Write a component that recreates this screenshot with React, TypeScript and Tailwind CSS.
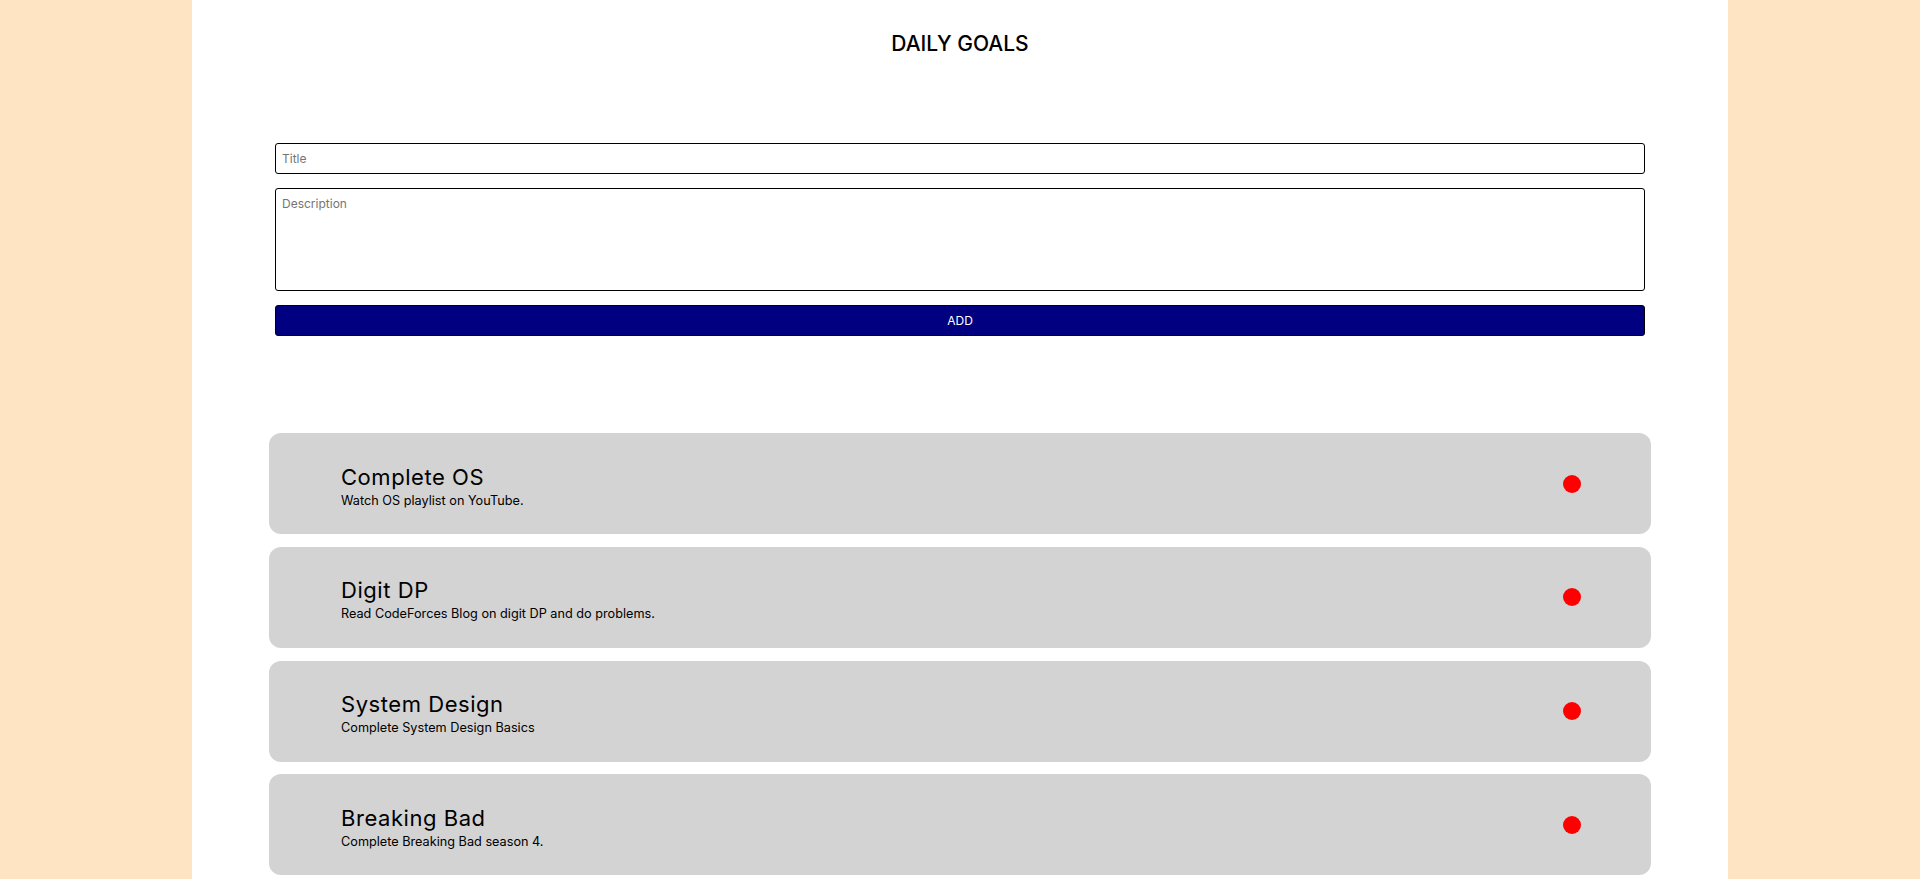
import React from "react";

const goals = [
  { title: "Complete OS", desc: "Watch OS playlist on YouTube." },
  { title: "Digit DP", desc: "Read CodeForces Blog on digit DP and do problems." },
  { title: "System Design", desc: "Complete System Design Basics" },
  { title: "Breaking Bad", desc: "Complete Breaking Bad season 4." },
];

export default function App() {
  return (
    <div className="min-h-screen bg-[#ffe4c4]" style={{ fontFamily: "Inter, 'Open Sans', sans-serif" }}>
      <div className="mx-auto w-[1536px] min-h-screen bg-white pt-[33px] pb-[20px]">
        <h1 className="text-center text-[21px] leading-[22px] font-medium text-black">DAILY GOALS</h1>
        <div className="mx-auto mt-[88px] flex w-[1370px] flex-col gap-[14px]">
          <input
            placeholder="Title"
            className="h-[31px] w-full rounded-[3px] border-[1.5px] border-black px-[6px] text-[12px] text-black placeholder:text-[#757575] outline-none"
          />
          <textarea
            placeholder="Description"
            className="h-[103px] w-full resize-none rounded-[3px] border-[1.5px] border-black px-[6px] pt-[6px] text-[12px] text-black placeholder:text-[#757575] outline-none"
          />
          <button className="h-[31px] w-full rounded-[3px] border-[1.5px] border-black bg-[#000080] text-[12px] text-white">
            ADD
          </button>
        </div>
        <div className="mx-auto mt-[97px] flex w-[1382px] flex-col gap-[12.8px]">
          {goals.map((g) => (
            <div key={g.title} className="flex h-[101px] items-center justify-between rounded-[12px] bg-[#d3d3d3] pl-[72px] pr-[70px]">
              <div className="flex flex-col pt-[3px]">
                <div className="text-[22px] leading-[30px] tracking-[0.55px] text-black">{g.title}</div>
                <div className="text-[12.7px] leading-[17px] text-black">{g.desc}</div>
              </div>
              <div className="h-[18px] w-[18px] rounded-full bg-[#ff0000]" />
            </div>
          ))}
        </div>
      </div>
    </div>
  );
}
